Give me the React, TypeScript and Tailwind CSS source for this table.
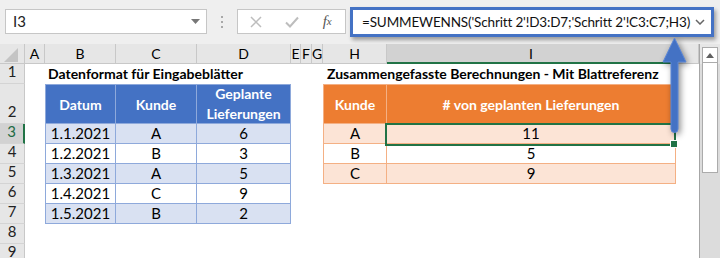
import React from "react"

const FONT = { fontFamily: "Lato, 'Open Sans', sans-serif" }

const colW = [25, 20, 71, 81, 94, 10, 11, 11, 64, 289, 23]
const colNames = ["", "A", "B", "C", "D", "E", "F", "G", "H", "I", ""]

type CellProps = {
  w: number
  className?: string
  children?: React.ReactNode
}

function Cell({ w, className = "", children }: CellProps) {
  return (
    <div className={`shrink-0 flex items-center justify-center ${className}`} style={{ width: w }}>
      {children}
    </div>
  )
}

const left = [
  ["1.1.2021", "A", "6"],
  ["1.2.2021", "B", "3"],
  ["1.3.2021", "A", "5"],
  ["1.4.2021", "C", "9"],
  ["1.5.2021", "B", "2"],
]

const right = [
  ["A", "11"],
  ["B", "5"],
  ["C", "9"],
]

function RowHead({ n, h, active }: { n: number; h: number; active?: boolean }) {
  return (
    <div
      className={`shrink-0 w-[25px] flex items-end justify-center border-b border-[#d4d4d4] text-[15px] pb-[1px] ${
        active ? "bg-[#d2d2d2] border-r-2 border-r-[#217346] text-[#1e6b43]" : "bg-[#e6e6e6] border-r border-r-[#c8c8c8] text-[#222]"
      }`}
      style={{ height: h }}
    >
      {n}
    </div>
  )
}

export default function App() {
  const leftBody = "border-r border-b border-[#8ea9db]"
  const rightBody = "border-r border-b border-[#f4b084]"

  return (
    <div className="relative w-[720px] h-[258px] overflow-hidden bg-white text-[15px] text-black" style={FONT}>
      {/* Formula bar */}
      <div className="h-[44px] bg-[#efefef] flex items-start pt-[9px]">
        <div className="ml-[5px] w-[202px] h-[25px] bg-white border border-[#c6c6c6] flex items-center pl-[7px] pr-[6px] text-[#222]">
          <span className="flex-1 text-[15px]">I3</span>
          <svg width="9" height="5" viewBox="0 0 9 5"><path d="M0 0h9L4.5 5z" fill="#777" /></svg>
        </div>
        <div className="w-[30px] h-[25px] flex flex-col items-center justify-center gap-[3px]">
          <div className="w-[2px] h-[2px] bg-[#a8a8a8]" />
          <div className="w-[2px] h-[2px] bg-[#a8a8a8]" />
          <div className="w-[2px] h-[2px] bg-[#a8a8a8]" />
        </div>
        <div className="w-[109px] h-[25px] bg-white border border-[#c6c6c6] flex items-center">
          <div className="w-[36px] flex justify-center">
            <svg width="12" height="12" viewBox="0 0 12 12"><path d="M1 1l10 10M11 1L1 11" stroke="#bdbdbd" strokeWidth="1.5" /></svg>
          </div>
          <div className="w-[36px] flex justify-center">
            <svg width="14" height="12" viewBox="0 0 14 12"><path d="M1 6.5l4 4L13 1.5" stroke="#bdbdbd" strokeWidth="2" fill="none" /></svg>
          </div>
          <div className="w-[36px] flex justify-center text-[#555] italic text-[15px]" style={{ fontFamily: "'Liberation Serif', serif" }}>
            f<span className="text-[11px] mt-[3px]">x</span>
          </div>
        </div>
        <div className="ml-[4px] -mt-[2px] w-[364px] h-[30px] bg-white border-[3px] border-[#4472c4] shadow-[2px_3px_4px_rgba(0,0,0,0.35)] flex items-center pl-[9px] pr-[6px]">
          <span className="flex-1 min-w-0 text-[13.5px] tracking-[-0.15px] text-[#111] whitespace-nowrap">=SUMMEWENNS('Schritt 2'!D3:D7;'Schritt 2'!C3:C7;H3)</span>
          <svg width="10" height="6" viewBox="0 0 10 6" className="shrink-0"><path d="M1 1l4 4 4-4" stroke="#666" strokeWidth="1.5" fill="none" /></svg>
        </div>
      </div>

      {/* Column headers */}
      <div className="flex h-[20px]">
        {colNames.map((c, i) => (
          <Cell
            key={i}
            w={colW[i]}
            className={`h-[20px] border-r border-[#c8c8c8] text-[14px] ${
              c === "I" ? "bg-[#d2d2d2] border-b-2 border-b-[#217346]" : "bg-[#e6e6e6] border-b border-b-[#c8c8c8]"
            }`}
          >
            {i === 0 ? (
              <svg width="14" height="14" viewBox="0 0 14 14" className="ml-[-2px] mt-[2px]"><path d="M14 0v14H0z" fill="#c4c4c4" /></svg>
            ) : (
              c
            )}
          </Cell>
        ))}
        <div className="flex-1 bg-[#e6e6e6] border-l border-[#a6a6a6]" />
      </div>

      {/* Sheet body */}
      <div className="flex">
        <div className="flex flex-col">
          {/* Row 1 */}
          <div className="flex h-[20px]">
            <RowHead n={1} h={20} />
            <Cell w={20} />
            <div className="w-[246px] shrink-0 pl-[3px] font-bold text-[14px] leading-[20px] whitespace-nowrap">Datenformat für Eingabeblätter</div>
            <Cell w={32} />
            <div className="w-[353px] shrink-0 pl-[4px] font-bold text-[14px] leading-[20px] whitespace-nowrap">Zusammengefasste Berechnungen - Mit Blattreferenz</div>
            <Cell w={23} />
          </div>

          {/* Row 2: headers */}
          <div className="flex h-[40px]">
            <RowHead n={2} h={40} />
            <Cell w={20} />
            <Cell w={71} className="h-[40px] bg-[#4472c4] text-white font-bold text-[14px] border-t border-l border-r border-b border-[#8ea9db]">Datum</Cell>
            <Cell w={81} className="h-[40px] bg-[#4472c4] text-white font-bold text-[14px] border-t border-r border-b border-[#8ea9db]">Kunde</Cell>
            <Cell w={94} className="h-[40px] bg-[#4472c4] text-white font-bold text-[14px] border-t border-r border-b border-[#8ea9db] text-center leading-[20px]">
              Geplante<br />Lieferungen
            </Cell>
            <Cell w={32} />
            <Cell w={64} className="h-[40px] bg-[#ed7d31] text-white font-bold text-[14px] border-t border-l border-r border-b border-[#f4b084]">Kunde</Cell>
            <Cell w={289} className="h-[40px] bg-[#ed7d31] text-white font-bold text-[14px] border-t border-b border-r border-[#f4b084]"># von geplanten Lieferungen</Cell>
            <Cell w={23} />
          </div>

          {/* Rows 3-9 */}
          {[0, 1, 2, 3, 4, 5, 6].map((r) => {
            const l = left[r]
            const rr = right[r]
            const lbg = r % 2 === 0 ? "bg-[#d9e1f2]" : "bg-white"
            const rbg = r % 2 === 0 ? "bg-[#fce4d6]" : "bg-white"
            return (
              <div key={r} className="flex h-[20px]">
                <RowHead n={r + 3} h={20} active={r === 0} />
                <Cell w={20} />
                {l ? (
                  <>
                    <Cell w={71} className={`h-[20px] ${lbg} ${leftBody} border-l`}>{l[0]}</Cell>
                    <Cell w={81} className={`h-[20px] ${lbg} ${leftBody}`}>{l[1]}</Cell>
                    <Cell w={94} className={`h-[20px] ${lbg} ${leftBody}`}>{l[2]}</Cell>
                  </>
                ) : (
                  <Cell w={246} />
                )}
                <Cell w={32} />
                {rr ? (
                  <>
                    <Cell w={64} className={`h-[20px] ${rbg} ${rightBody} border-l`}>{rr[0]}</Cell>
                    <Cell w={289} className={`h-[20px] ${rbg} ${rightBody}`}>{rr[1]}</Cell>
                  </>
                ) : (
                  <Cell w={353} />
                )}
                <Cell w={23} />
              </div>
            )
          })}
        </div>

        {/* Vertical scrollbar */}
        <div className="flex-1 h-[194px] bg-[#dcdcdc] border-l border-[#a6a6a6] flex flex-col items-center">
          <div className="w-[16px] h-[126px] mt-[-17px] bg-white border border-[#ababab] flex flex-col">
            <div className="h-[15px] border-b border-[#ababab] flex items-center justify-center">
              <svg width="8" height="5" viewBox="0 0 8 5"><path d="M0 5L4 0l4 5z" fill="#606060" /></svg>
            </div>
          </div>
        </div>
      </div>

      {/* Active cell selection */}
      <div className="absolute left-[385px] top-[123px] w-[291px] h-[23px] border-2 border-[#217346] pointer-events-none" />
      <div className="absolute left-[671px] top-[141px] w-[6px] h-[6px] bg-[#217346] outline outline-1 outline-white" />

      {/* Arrow */}
      <svg className="absolute left-[658px] top-[34px] drop-shadow-[2px_2px_3px_rgba(0,0,0,0.45)]" width="34" height="100" viewBox="0 0 34 100">
        <path d="M16.5 4L5 28h8v67a3.5 3.5 0 0 0 7 0V28h8z" fill="#4472c4" stroke="#5b86d6" strokeWidth="1" />
      </svg>
    </div>
  )
}
